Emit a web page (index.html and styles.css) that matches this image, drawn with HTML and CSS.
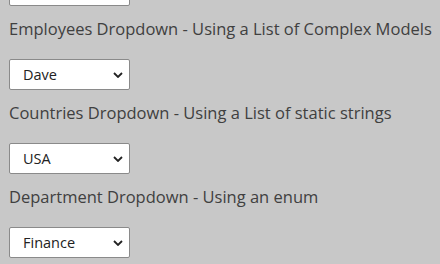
FILE: index.html
```html
<!DOCTYPE html>
<html>
<head>
<meta charset="utf-8">
<link rel="stylesheet" href="styles.css">
</head>
<body>
<div class="page">
  <div class="field first">
    <select class="dd"><option>Dave</option></select>
  </div>
  <div class="field">
    <label class="lbl">Employees Dropdown - Using a List of Complex Models</label>
    <select class="dd"><option>Dave</option></select>
  </div>
  <div class="field">
    <label class="lbl">Countries Dropdown - Using a List of static strings</label>
    <select class="dd"><option>USA</option></select>
  </div>
  <div class="field">
    <label class="lbl">Department Dropdown - Using an enum</label>
    <select class="dd"><option>Finance</option></select>
  </div>
</div>
</body>
</html>
```
FILE: styles.css
```css
html, body {
  margin: 0;
  padding: 0;
  background: #c8c8c8;
  height: 100%;
  overflow: hidden;
}
.page {
  padding-left: 9px;
  margin-top: -25px;
  display: flex;
  flex-direction: column;
  font-family: "Open Sans", "Noto Sans", sans-serif;
}
.field {
  display: flex;
  flex-direction: column;
  align-items: flex-start;
}
.lbl {
  display: block;
  color: #404040;
  font-size: 16.5px;
  line-height: 24px;
  margin-top: 11px;
  margin-bottom: 18px;
  white-space: nowrap;
}
.dd {
  appearance: none;
  -webkit-appearance: none;
  width: 121px;
  height: 31px;
  box-sizing: border-box;
  border: 1px solid #8a8a8a;
  border-radius: 2px;
  background-color: #ffffff;
  background-image: url("data:image/svg+xml;utf8,<svg xmlns='http://www.w3.org/2000/svg' width='10' height='6' viewBox='0 0 10 6'><path d='M1 1 L5 5 L9 1' fill='none' stroke='%23222' stroke-width='1.8'/></svg>");
  background-repeat: no-repeat;
  background-position: right 6px center;
  padding: 0 20px 0 13px;
  font-family: "Open Sans", "Noto Sans", sans-serif;
  font-size: 14.5px;
  color: #222;
}
```
